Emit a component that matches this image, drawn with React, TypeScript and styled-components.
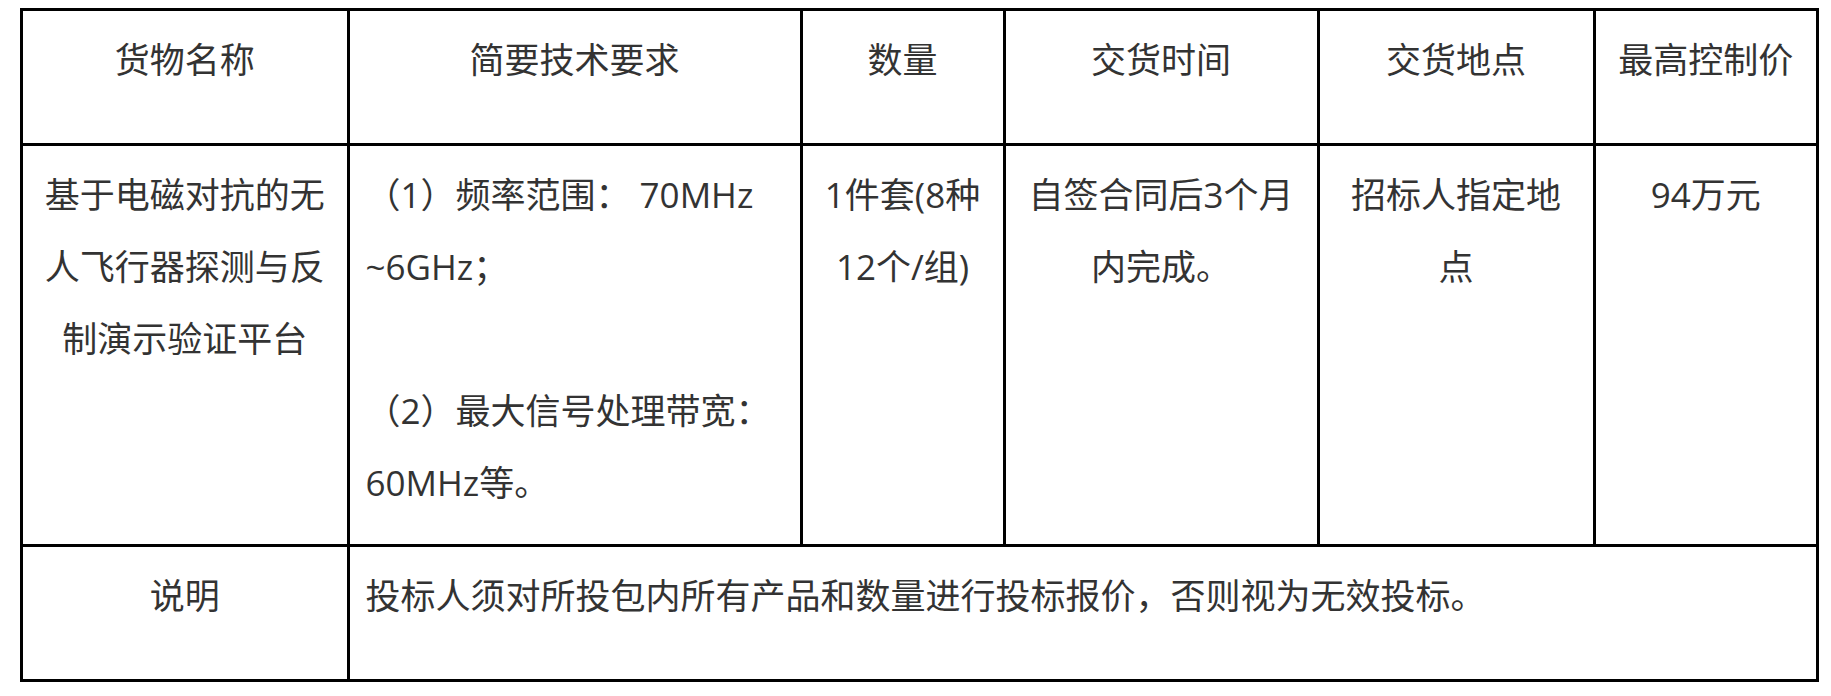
import React from "react"
import styled, { createGlobalStyle } from "styled-components"

const GlobalStyle = createGlobalStyle`
  html, body {
    margin: 0;
    padding: 0;
    background: #ffffff;
  }
  body {
    font-family: "Open Sans", "Noto Sans CJK SC", sans-serif;
    color: #333333;
  }
`

const Page = styled.div`
  padding: 8px 0 0 20px;
`

const Table = styled.table`
  width: 1799px;
  table-layout: fixed;
  border-collapse: collapse;
  border: 3px solid #000000;
  font-size: 35px;
  line-height: 72px;
`

const Col = styled.col<{ $w: number }>`
  width: ${(p) => p.$w}px;
`

const Row = styled.tr<{ $h: number }>`
  height: ${(p) => p.$h}px;
`

const Cell = styled.td<{ $align?: "left" | "center" }>`
  border: 3px solid #000000;
  padding: 13px 16px 0;
  vertical-align: top;
  text-align: ${(p) => p.$align ?? "center"};
  font-weight: 400;
`

const Para = styled.p`
  margin: 0;
  & + & {
    margin-top: 72px;
  }
`

const columns = [326.5, 453, 203, 314, 276, 223.5]

const headers = ["货物名称", "简要技术要求", "数量", "交货时间", "交货地点", "最高控制价"]

export default function App() {
  return (
    <>
      <GlobalStyle />
      <Page>
        <Table>
          <colgroup>
            {columns.map((w, i) => (
              <Col key={i} $w={w} />
            ))}
          </colgroup>
          <tbody>
            <Row $h={135}>
              {headers.map((h) => (
                <Cell key={h} as="th">
                  {h}
                </Cell>
              ))}
            </Row>
            <Row $h={401}>
              <Cell>基于电磁对抗的无人飞行器探测与反制演示验证平台</Cell>
              <Cell $align="left">
                <Para>（1）频率范围： 70MHz ~6GHz；</Para>
                <Para>（2）最大信号处理带宽：60MHz等。</Para>
              </Cell>
              <Cell>1件套(8种12个/组)</Cell>
              <Cell>自签合同后3个月内完成。</Cell>
              <Cell>招标人指定地点</Cell>
              <Cell>94万元</Cell>
            </Row>
            <Row $h={135}>
              <Cell>说明</Cell>
              <Cell $align="left" colSpan={5}>
                投标人须对所投包内所有产品和数量进行投标报价，否则视为无效投标。
              </Cell>
            </Row>
          </tbody>
        </Table>
      </Page>
    </>
  )
}
